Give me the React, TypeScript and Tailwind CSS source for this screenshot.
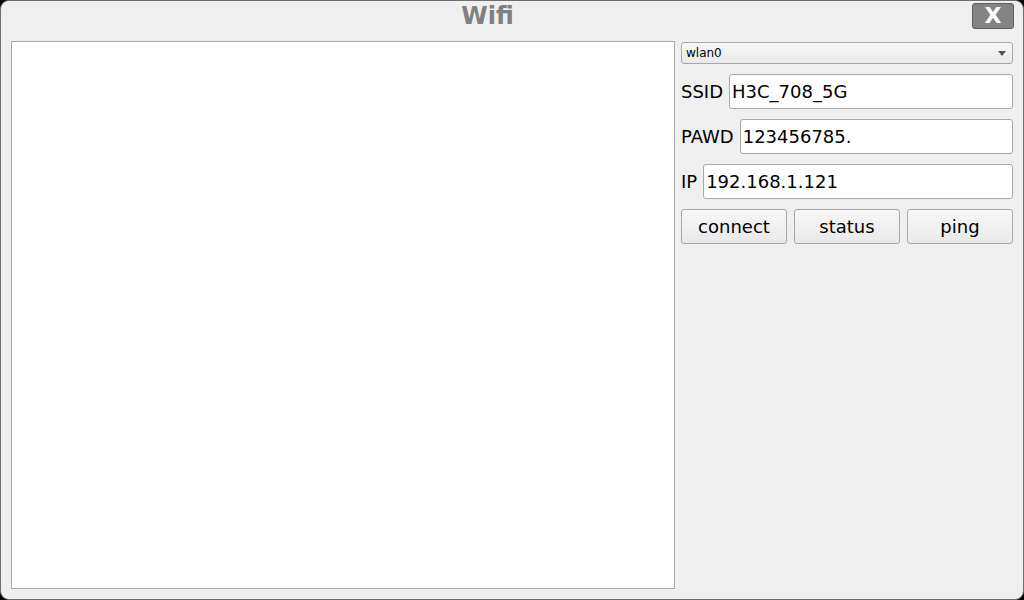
import React from 'react'

const font = { fontFamily: '"DejaVu Sans", Verdana, sans-serif' }

function Field({ label, value }: { label: string; value: string }) {
  return (
    <div className="flex items-center gap-[6px] h-[35px]">
      <span className="text-[18px] text-black leading-none">{label}</span>
      <div className="flex-1 h-[35px] bg-white border border-[#a8a8a8] rounded-[3px] flex items-center pl-[2px] text-[18px] text-black">
        {value}
      </div>
    </div>
  )
}

function Btn({ children }: { children: React.ReactNode }) {
  return (
    <button className="flex-1 h-[35px] rounded-[3px] border border-[#a8a8a8] bg-gradient-to-b from-[#f7f7f7] to-[#e9e9e9] text-[18px] text-black flex items-center justify-center">
      {children}
    </button>
  )
}

export default function App() {
  return (
    <div className="w-[1024px] h-[600px] bg-black" style={font}>
      <div className="w-full h-full rounded-[9px] border border-[#6e6e6e] bg-[#efefef] flex flex-col overflow-hidden">
        <div className="flex items-start h-[40px]">
          <div className="flex-1 text-center text-[24px] font-bold text-[#808080] leading-none pt-[3px] pl-[2px]">Wifi</div>
          <button className="mt-[2px] mr-[9px] w-[42px] h-[26px] rounded-[3px] border border-[#5e5e5e] bg-[#838383] text-white text-[22px] font-bold leading-none flex items-center justify-center">
            X
          </button>
        </div>
        <div className="flex flex-1 pl-[10px] pr-[10px] pb-[10px] gap-[6px]">
          <div className="w-[664px] bg-white border border-[#a8a8a8]" />
          <div className="flex-1 flex flex-col gap-[10px]">
            <div className="h-[22px] mt-[1px] bg-gradient-to-b from-[#f7f7f7] to-[#eaeaea] border border-[#a8a8a8] rounded-[3px] flex items-center justify-between pl-[4px] pr-[6px] text-[12px] text-black">
              <span>wlan0</span>
              <svg width="8" height="5" viewBox="0 0 8 5"><path d="M0 0 L8 0 L4 5 Z" fill="#555" /></svg>
            </div>
            <Field label="SSID" value="H3C_708_5G" />
            <Field label="PAWD" value="123456785." />
            <Field label="IP" value="192.168.1.121" />
            <div className="flex gap-[7px]">
              <Btn>connect</Btn>
              <Btn>status</Btn>
              <Btn>ping</Btn>
            </div>
          </div>
        </div>
      </div>
    </div>
  )
}
